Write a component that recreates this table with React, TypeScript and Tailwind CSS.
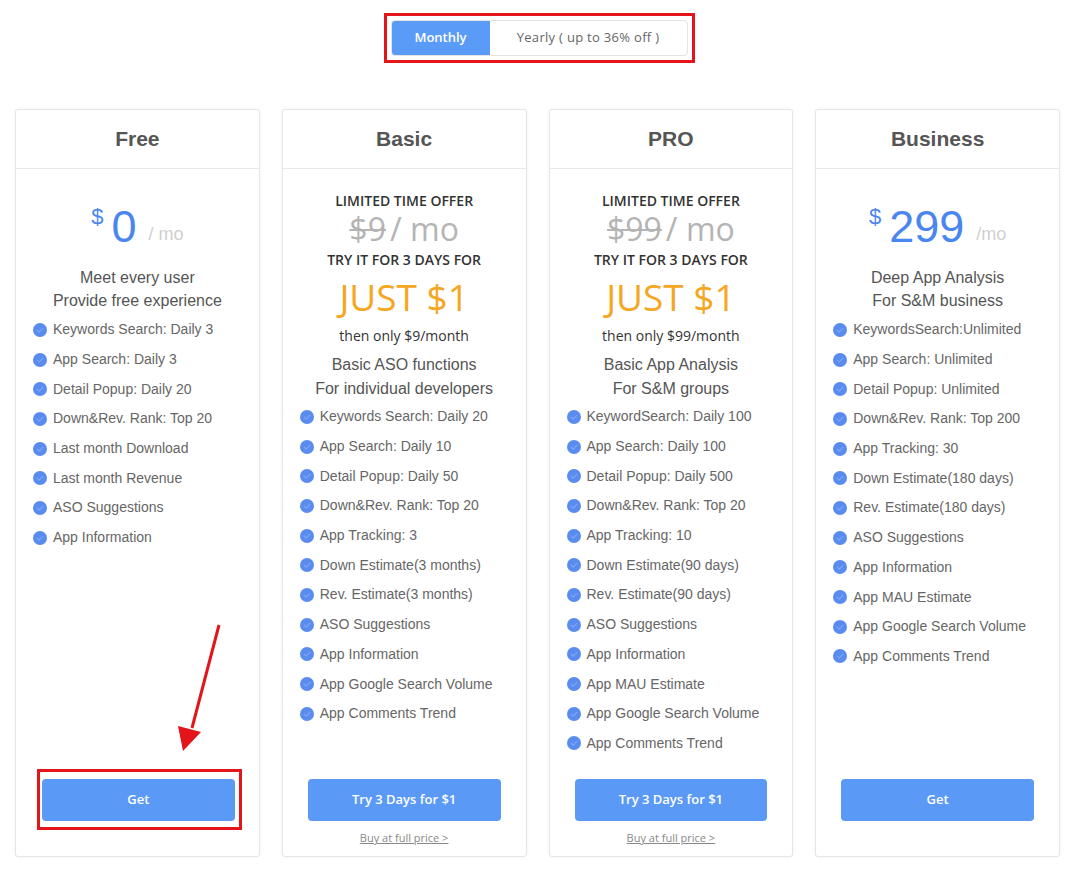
import React from 'react';

type Plan = {
  name: string;
  kind: 'plain' | 'offer';
  price?: string;
  was?: string;
  then?: string;
  desc: string[];
  features: string[];
  button: string;
  link?: boolean;
  marked?: boolean;
};

const plans: Plan[] = [
  {
    name: 'Free',
    kind: 'plain',
    price: '0',
    desc: ['Meet every user', 'Provide free experience'],
    features: [
      'Keywords Search: Daily 3',
      'App Search: Daily 3',
      'Detail Popup: Daily 20',
      'Down&Rev. Rank: Top 20',
      'Last month Download',
      'Last month Revenue',
      'ASO Suggestions',
      'App Information',
    ],
    button: 'Get',
    marked: true,
  },
  {
    name: 'Basic',
    kind: 'offer',
    was: '$9',
    then: 'then only $9/month',
    desc: ['Basic ASO functions', 'For individual developers'],
    features: [
      'Keywords Search: Daily 20',
      'App Search: Daily 10',
      'Detail Popup: Daily 50',
      'Down&Rev. Rank: Top 20',
      'App Tracking: 3',
      'Down Estimate(3 months)',
      'Rev. Estimate(3 months)',
      'ASO Suggestions',
      'App Information',
      'App Google Search Volume',
      'App Comments Trend',
    ],
    button: 'Try 3 Days for $1',
    link: true,
  },
  {
    name: 'PRO',
    kind: 'offer',
    was: '$99',
    then: 'then only $99/month',
    desc: ['Basic App Analysis', 'For S&M groups'],
    features: [
      'KeywordSearch: Daily 100',
      'App Search: Daily 100',
      'Detail Popup: Daily 500',
      'Down&Rev. Rank: Top 20',
      'App Tracking: 10',
      'Down Estimate(90 days)',
      'Rev. Estimate(90 days)',
      'ASO Suggestions',
      'App Information',
      'App MAU Estimate',
      'App Google Search Volume',
      'App Comments Trend',
    ],
    button: 'Try 3 Days for $1',
    link: true,
  },
  {
    name: 'Business',
    kind: 'plain',
    price: '299',
    desc: ['Deep App Analysis', 'For S&M business'],
    features: [
      'KeywordsSearch:Unlimited',
      'App Search: Unlimited',
      'Detail Popup: Unlimited',
      'Down&Rev. Rank: Top 200',
      'App Tracking: 30',
      'Down Estimate(180 days)',
      'Rev. Estimate(180 days)',
      'ASO Suggestions',
      'App Information',
      'App MAU Estimate',
      'App Google Search Volume',
      'App Comments Trend',
    ],
    button: 'Get',
  },
];

// solid blue dot, the tick inside is barely visible
const Check = () => (
  <svg width="14" height="14" viewBox="0 0 14 14" className="shrink-0">
    <circle cx="7" cy="7" r="7" fill="#5a8cef" />
    <path d="M4.2 7.2l1.9 1.9 3.8-3.8" fill="none" stroke="#7ea6f3" strokeWidth="1.2" strokeLinecap="round" strokeLinejoin="round" />
  </svg>
);

const PlanCard = ({ plan }: { plan: Plan }) => {
  const btn = (
    <button className="w-full h-[42px] rounded-[4px] bg-[#5a9af6] text-white text-[13px] font-semibold [font-family:'Open_Sans',sans-serif]">
      {plan.button}
    </button>
  );

  return (
    <div className="flex flex-col h-[748px] bg-white border border-[#e6e6e6] rounded-[3px] shadow-[0_0_4px_rgba(0,0,0,0.05)]">
      <div className="h-[59px] shrink-0 flex items-center justify-center border-b border-[#e8e8e8] text-[21px] font-bold text-[#555] [font-family:Arial,'Liberation_Sans',sans-serif]">
        {plan.name}
      </div>

      {plan.kind === 'plain' ? (
        <div className="flex flex-col items-center pt-[34px] pb-[2px]">
          <div className="flex items-start h-[48px]">
            <span className="text-[22px] leading-none text-[#4d86ee] mt-[3px] mr-[8px] [font-family:Arial,'Liberation_Sans',sans-serif]">$</span>
            <span className="text-[45px] leading-[48px] text-[#4a86f0] [font-family:Arial,'Liberation_Sans',sans-serif]">{plan.price}</span>
            <span className="text-[18px] text-[#d0d0d0] ml-[12px] mt-[22px] leading-none [font-family:Arial,'Liberation_Sans',sans-serif]">
              {plan.price === '0' ? '/ mo' : '/mo'}
            </span>
          </div>
          <div className="mt-[15px] text-center text-[16px] leading-[23px] text-[#555] [font-family:Arial,'Liberation_Sans',sans-serif]">
            {plan.desc.map((d) => (
              <div key={d}>{d}</div>
            ))}
          </div>
        </div>
      ) : (
        <div className="flex flex-col items-center pt-[22px] [font-family:'Open_Sans',sans-serif]">
          <div className="text-[14px] leading-[20px] font-semibold text-[#333]">LIMITED TIME OFFER</div>
          <div className="text-[32px] leading-[36px] text-[#b4b4b4]">
            <span className="line-through decoration-[2px]">{plan.was}</span>
            <span className="ml-[4px]">/ mo</span>
          </div>
          <div className="mt-[3px] text-[14px] leading-[20px] font-semibold text-[#333]">TRY IT FOR 3 DAYS FOR</div>
          <div className="mt-[5px] text-[37px] leading-[44px] text-[#f5a623]">JUST $1</div>
          <div className="mt-[7px] text-[14px] leading-[20px] text-[#333]">{plan.then}</div>
          <div className="mt-[7px] text-center text-[16px] leading-[24px] text-[#555] [font-family:Arial,'Liberation_Sans',sans-serif]">
            {plan.desc.map((d) => (
              <div key={d}>{d}</div>
            ))}
          </div>
        </div>
      )}

      <ul className="flex-1 mt-[1px] pl-[17px] [font-family:Arial,'Liberation_Sans',sans-serif]">
        {plan.features.map((f) => (
          <li key={f} className="flex items-center gap-[6px] h-[29.7px] text-[14px] text-[#666]">
            <Check />
            <span>{f}</span>
          </li>
        ))}
      </ul>

      {plan.marked ? (
        <div className="h-[87px] shrink-0 pl-[21px] pr-[17px]">
          <div className="border-[3px] border-[#e4141b] pt-[7px] pb-[6px] pl-[2px] pr-[4px]">{btn}</div>
        </div>
      ) : (
        <div className="h-[87px] shrink-0 pt-[10px] px-[25px] flex flex-col items-center">
          {btn}
          {plan.link && (
            <a className="mt-[9px] text-[11px] leading-[16px] text-[#888] underline [font-family:'Open_Sans',sans-serif]">
              Buy at full price &gt;
            </a>
          )}
        </div>
      )}
    </div>
  );
};

export default function App() {
  return (
    <div className="relative w-[1078px] h-[871px] bg-white overflow-hidden">
      <div className="flex justify-center pt-[13px]">
        <div className="border-[3px] border-[#e4141b] w-[311px] h-[50px] px-[4px] py-[4px]">
          <div className="flex h-full border border-[#e3e3e3] rounded-[4px] overflow-hidden text-[13px] [font-family:'Open_Sans',sans-serif]">
            <div className="w-[98px] flex items-center justify-center bg-[#5b9bf8] text-white font-semibold">Monthly</div>
            <div className="flex-1 flex items-center justify-center text-[#666] tracking-[0.3px]">Yearly ( up to 36% off )</div>
          </div>
        </div>
      </div>

      <div className="grid grid-cols-4 gap-[22px] w-[1045px] ml-[15px] mt-[46px]">
        {plans.map((p) => (
          <PlanCard key={p.name} plan={p} />
        ))}
      </div>

      <svg className="absolute left-0 top-0 pointer-events-none" width="1078" height="871">
        <line x1="219" y1="625" x2="192" y2="728" stroke="#e4141b" strokeWidth="3" />
        <polygon points="183,751 178,726 201,732" fill="#e4141b" />
      </svg>
    </div>
  );
}
